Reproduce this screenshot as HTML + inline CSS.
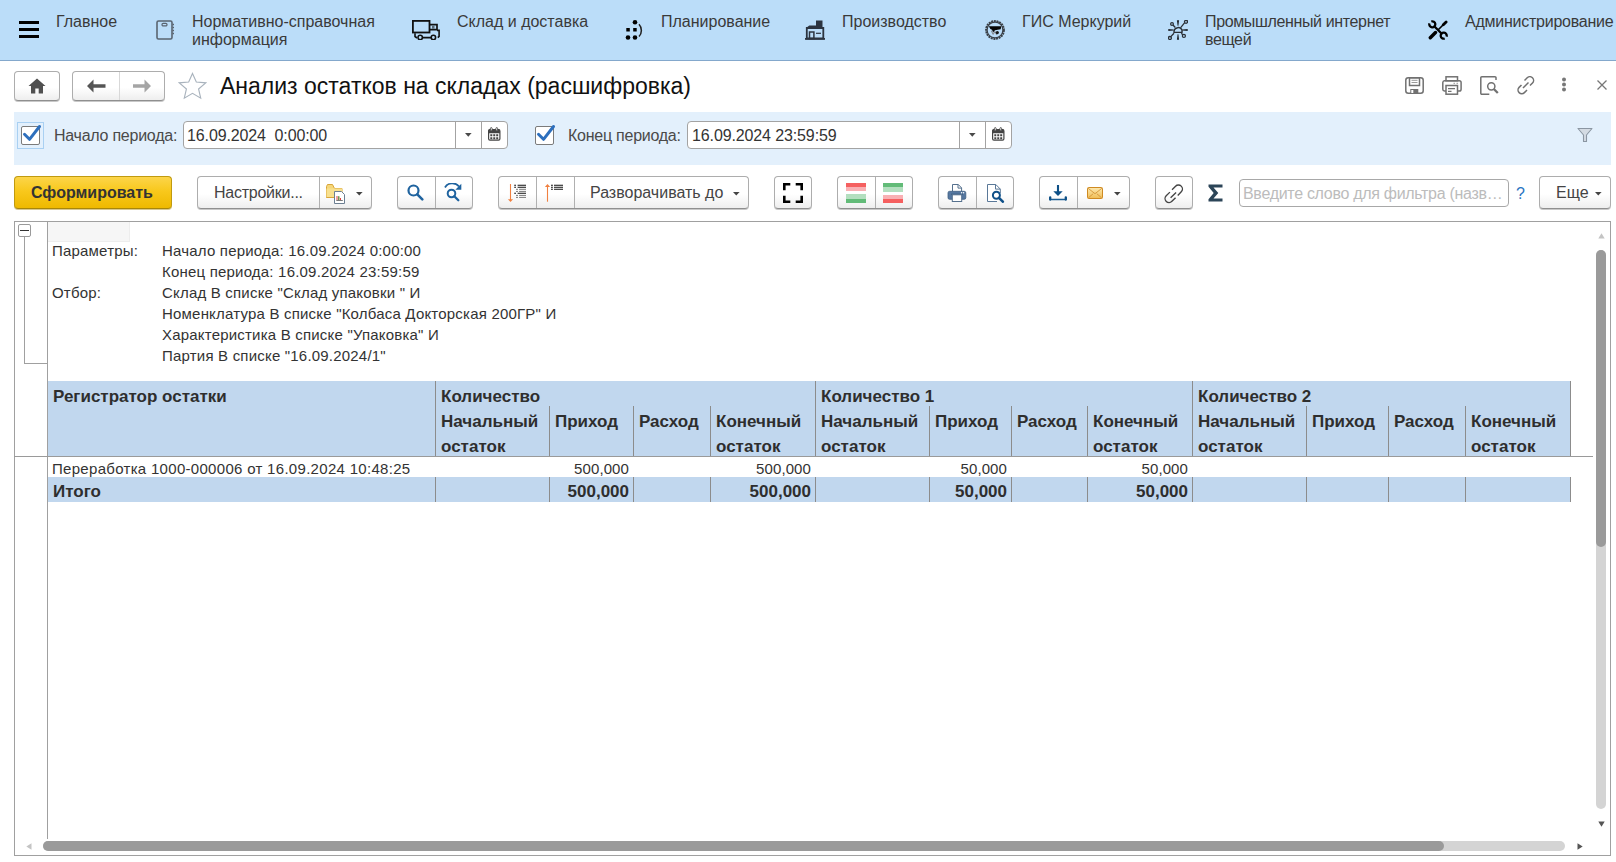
<!DOCTYPE html>
<html><head><meta charset="utf-8">
<style>
*{box-sizing:border-box;margin:0;padding:0}
html,body{width:1616px;height:862px;overflow:hidden;background:#fff;font-family:"Liberation Sans",sans-serif;position:relative}
.a{position:absolute}
#top{left:0;top:0;width:1616px;height:61px;background:#bbddf9;border-bottom:1px solid #84a8cc}
.mt{position:absolute;top:13px;font-size:16px;line-height:18px;color:#3a3a3a;white-space:pre}
.btn{position:absolute;border:1px solid #adadad;border-bottom-color:#8f8f8f;border-radius:4px;background:linear-gradient(#ffffff 0%,#ffffff 55%,#eeeeee 100%);box-shadow:0 1px 0 #c8c8c8}
.div{position:absolute;top:0;bottom:0;width:1px;background:#b0b0b0}
.lbl{position:absolute;font-size:16px;line-height:18px;color:#4a4a4a;white-space:pre;letter-spacing:-0.25px}
.inp{position:absolute;background:#fff;border:1px solid #a3a3a3;border-radius:4px}
.rt{position:absolute;font-size:15px;line-height:18px;color:#333;white-space:pre;letter-spacing:0.2px}
.hd{position:absolute;font-size:17px;line-height:18px;color:#2e2e2e;font-weight:700;white-space:pre}
.vl{position:absolute;width:1px;background:#8c8c8c}
</style></head><body>

<!-- TOP BAR -->
<div id="top" class="a"></div>
<div class="a" style="left:19px;top:21px;width:20px;height:3px;background:#000"></div>
<div class="a" style="left:19px;top:28px;width:20px;height:3px;background:#000"></div>
<div class="a" style="left:19px;top:35px;width:20px;height:3px;background:#000"></div>
<div class="mt" style="left:56px">Главное</div>
<div class="mt" style="left:192px">Нормативно-справочная
информация</div>
<div class="mt" style="left:457px">Склад и доставка</div>
<div class="mt" style="left:661px">Планирование</div>
<div class="mt" style="left:842px">Производство</div>
<div class="mt" style="left:1022px">ГИС Меркурий</div>
<div class="mt" style="left:1205px;letter-spacing:-0.36px">Промышленный интернет
вещей</div>
<div class="mt" style="left:1465px;letter-spacing:-0.25px">Администрирование</div>

<!-- menu icons -->
<svg class="a" style="left:156px;top:20px" width="20" height="20" viewBox="0 0 20 20"><rect x="1" y="1" width="15" height="18" rx="1.5" fill="none" stroke="#5a6470" stroke-width="1.6"/><rect x="6" y="3.3" width="5" height="2.6" rx="1.2" fill="none" stroke="#5a6470" stroke-width="1.2"/><path d="M16.5 4.5h1.5M16.5 7.5h1.5M16.5 10.5h1.5M16.5 13.5h1.5" stroke="#5a6470" stroke-width="1.4"/></svg>
<svg class="a" style="left:412px;top:20px" width="28" height="20" viewBox="0 0 28 20"><rect x="0.9" y="0.9" width="16.6" height="11.6" fill="none" stroke="#111" stroke-width="1.8"/><path d="M17.5 4.6H25V9.6H17.5" fill="none" stroke="#111" stroke-width="1.7"/><rect x="20" y="5.5" width="2.5" height="3.3" fill="#5a6a78"/><path d="M25 10.4h2.1v6l-1.3 1.2M3 13.3v3.2l2 1.5M10.6 17.6h8.7" fill="none" stroke="#111" stroke-width="1.6"/><circle cx="8.2" cy="17.5" r="2.2" fill="none" stroke="#111" stroke-width="1.6"/><circle cx="21.4" cy="17.5" r="2.2" fill="none" stroke="#111" stroke-width="1.6"/></svg>
<svg class="a" style="left:625px;top:20px" width="20" height="20" viewBox="0 0 20 20"><circle cx="10" cy="2.3" r="2.3" fill="#000"/><rect x="1.3" y="8" width="3.5" height="3.5" fill="#000"/><rect x="8.2" y="8" width="3.5" height="3.5" fill="#000"/><circle cx="3" cy="17.5" r="2.3" fill="#000"/><circle cx="10" cy="17.5" r="2.3" fill="#000"/><path d="M14 4.3 A9 9 0 0 1 14 16.5" fill="none" stroke="#222" stroke-width="1.5"/></svg>
<svg class="a" style="left:805px;top:20px" width="20" height="20" viewBox="0 0 20 20"><path d="M11 0.5h6.5v7H11z" fill="#2c3440"/><path d="M2 7.3l2.3-1.8H11v1.8" fill="#2c3440"/><path d="M1.8 8h16.5v10.5H1.8z" fill="none" stroke="#2c3440" stroke-width="1.8"/><path d="M0 18h20v1.8H0z" fill="#2c3440"/><rect x="4.5" y="12" width="4.4" height="6.5" fill="none" stroke="#2c3440" stroke-width="1.5"/><path d="M11 13.3h5" stroke="#2c3440" stroke-width="1.2"/></svg>
<svg class="a" style="left:985px;top:20px" width="20" height="20" viewBox="0 0 20 20"><circle cx="10" cy="10" r="8.9" fill="none" stroke="#3a4048" stroke-width="2" stroke-dasharray="2 0.7"/><circle cx="10" cy="10" r="7.9" fill="none" stroke="#3a4048" stroke-width="1.2"/><path d="M6.3 10.8l1.8 3.4 1.7-2.6 1.8 2.6 1.4-2" fill="none" stroke="#8a9098" stroke-width="1.1"/><path d="M3.8 6.2H16.2L15.7 9.3Q12.5 9.6 10 10.2L8.1 12.3 7 9.8Q5 9.2 3.8 6.2z" fill="#050505"/><circle cx="12.3" cy="12.6" r="1.6" fill="#151515"/></svg>
<svg class="a" style="left:1168px;top:20px" width="20" height="20" viewBox="0 0 20 20"><path d="M8.9 0.3h2.2l-0.7 5.4h-0.8zM8.9 19.7h2.2l-0.7-5.4h-0.8zM0.3 8.9v2.2l5.4-0.7v-0.8zM19.7 8.9v2.2l-5.4-0.7v-0.8z" fill="#20252c"/><path d="M6 12.4Q5.8 8.6 9 8Q10.6 6.8 12.6 8.3Q14.6 9.2 14 12.4z" fill="none" stroke="#2a2f36" stroke-width="1.4"/><path d="M12.5 7.8L16.7 2.7M6 13.2L2.8 16.6M5 5l2.3 2.5M13.3 13.2l1.5 1.5" stroke="#2a2f36" stroke-width="1.3"/><circle cx="18" cy="1.8" r="1.5" fill="none" stroke="#2a2f36" stroke-width="1.3"/><circle cx="4" cy="4" r="1.4" fill="none" stroke="#2a2f36" stroke-width="1.2"/><circle cx="1.9" cy="18" r="1.5" fill="none" stroke="#2a2f36" stroke-width="1.3"/><circle cx="15.9" cy="15.9" r="1.5" fill="none" stroke="#2a2f36" stroke-width="1.3"/></svg>
<svg class="a" style="left:1428px;top:20px" width="20" height="20" viewBox="0 0 20 20"><path d="M2.3 17.7l5.2-5.2" stroke="#000" stroke-width="3.4" stroke-linecap="round"/><path d="M10.5 9.5l5.5-5.5" stroke="#000" stroke-width="1.6" stroke-linecap="round"/><path d="M15.3 4.7l2.8-2.8" stroke="#000" stroke-width="2.8" stroke-linecap="round"/><path d="M6 6l8 8" stroke="#000" stroke-width="2.3"/><path d="M3.27 1.48A3 3 0 1 1 1.48 3.27M16.73 18.52A3 3 0 1 1 18.52 16.73" fill="none" stroke="#000" stroke-width="2.3"/></svg>

<!-- TITLE ROW -->
<div class="btn" style="left:14px;top:71px;width:46px;height:30px"></div>
<svg class="a" style="left:28px;top:78px" width="18" height="16" viewBox="0 0 18 16"><path d="M9 0.5L0.5 8H3v7.5h4.3v-5h3.4v5H15V8h2.5z" fill="#505050"/></svg>
<div class="btn" style="left:72px;top:71px;width:93px;height:30px"><div class="div" style="left:46px;background:#d8d8d8"></div></div>
<svg class="a" style="left:87px;top:79px" width="19" height="14" viewBox="0 0 19 14"><path d="M0 7L6.5 0.5v4.7h12v3.6h-12v4.7z" fill="#555"/></svg>
<svg class="a" style="left:132px;top:79px" width="19" height="14" viewBox="0 0 19 14"><path d="M19 7L12.5 0.5v4.7H1v3.6h11.5v4.7z" fill="#a5a5a5"/></svg>
<svg class="a" style="left:178px;top:72px" width="29" height="28" viewBox="0 0 31 30"><path d="M15.5 1.5l4.1 9.3 10 .8-7.6 6.6 2.3 9.8-8.8-5.2-8.8 5.2 2.3-9.8-7.6-6.6 10-.8z" fill="none" stroke="#a9b3bd" stroke-width="1.2" stroke-linejoin="miter"/></svg>
<div class="a" style="left:220px;top:73px;font-size:23px;line-height:26px;color:#111;white-space:pre">Анализ остатков на складах (расшифровка)</div>

<svg class="a" style="left:1405px;top:77px" width="19" height="17" viewBox="0 0 19 17"><rect x="0.8" y="0.8" width="17.4" height="15.4" rx="2.5" fill="none" stroke="#717171" stroke-width="1.5"/><rect x="4.5" y="0.8" width="10" height="7.7" fill="none" stroke="#717171" stroke-width="1.5"/><path d="M6.5 3.3h6M6.5 5.5h6" stroke="#9a9a9a" stroke-width="1"/><rect x="5.3" y="12" width="8" height="4.5" fill="#717171"/><rect x="6.3" y="13" width="2" height="3" fill="#fff"/></svg>
<svg class="a" style="left:1442px;top:76px" width="20" height="19" viewBox="0 0 20 19"><rect x="4" y="0.8" width="11.5" height="4" fill="none" stroke="#717171" stroke-width="1.5"/><path d="M4 15H2.5A1.8 1.8 0 0 1 0.8 13.2V6.5A1.8 1.8 0 0 1 2.5 4.8h14.8a1.8 1.8 0 0 1 1.8 1.8v6.7a1.8 1.8 0 0 1-1.8 1.8H15.5" fill="none" stroke="#717171" stroke-width="1.5"/><rect x="4" y="9.5" width="11.5" height="8.7" fill="#fff" stroke="#717171" stroke-width="1.5"/><path d="M6 12.7h7M6 15.3h3.5" stroke="#717171" stroke-width="1.2"/><path d="M11.5 7.3h1.5M14.5 7.3h1.5" stroke="#999" stroke-width="1"/></svg>
<svg class="a" style="left:1480px;top:76px" width="20" height="19" viewBox="0 0 20 19"><path d="M9.3 18.2H1.8A1 1 0 0 1 0.8 17.2V1.8A1 1 0 0 1 1.8 0.8H15a1 1 0 0 1 1 1V4" fill="none" stroke="#717171" stroke-width="1.5"/><circle cx="11.3" cy="10.3" r="3.6" fill="none" stroke="#717171" stroke-width="1.5"/><path d="M13.8 13l4 4" stroke="#717171" stroke-width="2.3"/></svg>
<svg class="a" style="left:1516px;top:76px" width="20" height="19" viewBox="0 0 20 19"><path d="M8.5 4.5l2.7-2.7a3.7 3.7 0 0 1 5.3 5.2L14 9.5M11 14l-2.6 2.6a3.7 3.7 0 0 1-5.3-5.2L5.5 9M7 12l5.5-5.5" fill="none" stroke="#717171" stroke-width="1.5"/></svg>
<svg class="a" style="left:1561px;top:77px" width="6" height="15" viewBox="0 0 6 15"><circle cx="3" cy="2.5" r="2" fill="#777"/><circle cx="3" cy="7.5" r="2" fill="#777"/><circle cx="3" cy="12.5" r="2" fill="#777"/></svg>
<svg class="a" style="left:1597px;top:80px" width="10" height="10" viewBox="0 0 10 10"><path d="M0.5 0.5l9 9M9.5 0.5l-9 9" stroke="#777" stroke-width="1.3"/></svg>

<!-- FILTER PANEL -->
<div class="a" style="left:14px;top:112px;width:1597px;height:53px;background:#e3f0fc"></div>
<div class="a" style="left:17px;top:122px;width:27px;height:27px;border:1px solid #a9d0f2"></div>
<div class="a" style="left:21px;top:126px;width:19px;height:19px;border:1px solid #7b7b7b;border-radius:2px;background:#fff"></div>
<svg class="a" style="left:22px;top:124px" width="20" height="18" viewBox="0 0 20 18"><path d="M2.5 10.3l5 5L17.5 2.5" fill="none" stroke="#2d6fbd" stroke-width="3" stroke-linecap="round" stroke-linejoin="round"/></svg>
<div class="lbl" style="left:54px;top:127px">Начало периода:</div>
<div class="inp" style="left:183px;top:121px;width:325px;height:28px"><div class="div" style="left:271px;background:#a3a3a3"></div><div class="div" style="left:297px;background:#a3a3a3"></div></div>
<div class="a" style="left:187px;top:127px;font-size:16px;line-height:18px;color:#333;white-space:pre;letter-spacing:-0.12px">16.09.2024  0:00:00</div>
<svg class="a" style="left:465px;top:133px" width="7" height="4" viewBox="0 0 7 4"><path d="M0 0h6.6L3.3 3.8z" fill="#4a4a4a"/></svg>
<svg class="a" style="left:488px;top:127px" width="13" height="15" viewBox="0 0 13 15"><rect x="0.6" y="2.6" width="11.3" height="10.5" rx="1.3" fill="#fff" stroke="#444" stroke-width="1.2"/><path d="M1.9 2.3h8.7a1.3 1.3 0 0 1 1.3 1.3v2.7H0.6V3.6a1.3 1.3 0 0 1 1.3-1.3z" fill="#444"/><rect x="2.4" y="0.6" width="1.7" height="3.2" rx=".85" fill="#fff" stroke="#444" stroke-width=".9"/><rect x="7.9" y="0.6" width="1.7" height="3.2" rx=".85" fill="#fff" stroke="#444" stroke-width=".9"/><path d="M2.3 7.3h2v2h-2zM5.25 7.3h2v2h-2zM8.2 7.3h2v2h-2zM2.3 10.2h2v2h-2zM5.25 10.2h2v2h-2zM8.2 10.2h2v2h-2z" fill="#444"/></svg>
<div class="a" style="left:535px;top:126px;width:19px;height:19px;border:1px solid #7b7b7b;border-radius:2px;background:#fff"></div>
<svg class="a" style="left:536px;top:124px" width="20" height="18" viewBox="0 0 20 18"><path d="M2.5 10.3l5 5L17.5 2.5" fill="none" stroke="#2d6fbd" stroke-width="3" stroke-linecap="round" stroke-linejoin="round"/></svg>
<div class="lbl" style="left:568px;top:127px">Конец периода:</div>
<div class="inp" style="left:687px;top:121px;width:325px;height:28px"><div class="div" style="left:271px;background:#a3a3a3"></div><div class="div" style="left:297px;background:#a3a3a3"></div></div>
<div class="a" style="left:692px;top:127px;font-size:16px;line-height:18px;color:#333;white-space:pre;letter-spacing:-0.12px">16.09.2024 23:59:59</div>
<svg class="a" style="left:969px;top:133px" width="7" height="4" viewBox="0 0 7 4"><path d="M0 0h6.6L3.3 3.8z" fill="#4a4a4a"/></svg>
<svg class="a" style="left:992px;top:127px" width="13" height="15" viewBox="0 0 13 15"><rect x="0.6" y="2.6" width="11.3" height="10.5" rx="1.3" fill="#fff" stroke="#444" stroke-width="1.2"/><path d="M1.9 2.3h8.7a1.3 1.3 0 0 1 1.3 1.3v2.7H0.6V3.6a1.3 1.3 0 0 1 1.3-1.3z" fill="#444"/><rect x="2.4" y="0.6" width="1.7" height="3.2" rx=".85" fill="#fff" stroke="#444" stroke-width=".9"/><rect x="7.9" y="0.6" width="1.7" height="3.2" rx=".85" fill="#fff" stroke="#444" stroke-width=".9"/><path d="M2.3 7.3h2v2h-2zM5.25 7.3h2v2h-2zM8.2 7.3h2v2h-2zM2.3 10.2h2v2h-2zM5.25 10.2h2v2h-2zM8.2 10.2h2v2h-2z" fill="#444"/></svg>
<svg class="a" style="left:1577px;top:127px" width="16" height="16" viewBox="0 0 16 16"><path d="M1 1.5h14L9.5 8v6.5H6.5V8z" fill="#d4dbe3" stroke="#8b96a2" stroke-width="1.1" stroke-linejoin="round"/></svg>

<!-- TOOLBAR -->
<div class="a" style="left:14px;top:176px;width:158px;height:33px;border:1px solid #c09a10;border-bottom-color:#a8860a;border-radius:4px;background:linear-gradient(#fcd54a 0%,#f8c81c 45%,#efb900 100%);box-shadow:0 1px 0 #d8c890"></div>
<div class="a" style="left:31px;top:184px;font-size:16px;line-height:18px;font-weight:700;color:#333;white-space:pre">Сформировать</div>

<div class="btn" style="left:197px;top:176px;width:175px;height:33px"><div class="div" style="left:121px"></div></div>
<div class="a" style="left:214px;top:184px;font-size:16px;line-height:18px;color:#444;white-space:pre;letter-spacing:-0.25px">Настройки...</div>
<svg class="a" style="left:326px;top:183px" width="22" height="21" viewBox="0 0 22 21"><path d="M0.5 3.5V14.5H16V5.5H8.5L6.5 1.5H1.5z" fill="#f5d77a" stroke="#d9a53a" stroke-width="1"/><path d="M0.5 5.5H16V14.5H0.5z" fill="#f8e08e"/><path d="M0.5 14.5H16" stroke="#d9a53a" stroke-width="1"/><path d="M8.5 8.5h7l3 3v9h-10z" fill="#fff" stroke="#6c7f92" stroke-width="1"/><path d="M11 17V13M12.8 17v-3.2M14.5 17v-2" stroke="#e04040" stroke-width="1"/><path d="M12.8 17v-4" stroke="#40a040" stroke-width="1"/><path d="M10.3 17.5h6.5" stroke="#555" stroke-width=".8"/></svg>
<svg class="a" style="left:356px;top:192px" width="7" height="4" viewBox="0 0 7 4"><path d="M0 0h6.6L3.3 3.6z" fill="#444"/></svg>

<div class="btn" style="left:397px;top:176px;width:76px;height:33px"><div class="div" style="left:37px"></div></div>
<svg class="a" style="left:407px;top:184px" width="17" height="17" viewBox="0 0 17 17"><circle cx="6.5" cy="6.5" r="5" fill="none" stroke="#1f639f" stroke-width="2.2"/><path d="M10.3 10.3l5 5" stroke="#1f639f" stroke-width="2.6" stroke-linecap="round"/></svg>
<svg class="a" style="left:444px;top:183px" width="19" height="19" viewBox="0 0 19 19"><path d="M1 4.5A8 7 0 0 1 15 3.5" fill="none" stroke="#1f639f" stroke-width="1.8"/><path d="M17.3 0.8v6h-6z" fill="#1f639f"/><circle cx="7.5" cy="10.5" r="3.8" fill="none" stroke="#1f639f" stroke-width="2"/><path d="M10.3 13.3l4 4" stroke="#1f639f" stroke-width="2.3" stroke-linecap="round"/></svg>

<div class="btn" style="left:498px;top:176px;width:251px;height:33px"><div class="div" style="left:37px"></div><div class="div" style="left:75px"></div></div>
<svg class="a" style="left:506px;top:183px" width="22" height="20" viewBox="0 0 22 20"><path d="M4.5 1v16" stroke="#f08040" stroke-width="1.1"/><path d="M1.9 16.2h5.2L4.5 19z" fill="#f08040"/><path d="M8.2 2.3h1.8M11.6 2.3H20M8.2 4.3h1.8M11.6 4.3H20M8.2 10.3h1.8M11.6 10.3H20" stroke="#111" stroke-width="1.1"/><path d="M10 6.3h2M13.1 6.3H20M10 8.4h2M13.1 8.4H20M10 12.4h2M13.1 12.4H20M10 14.4h2M13.1 14.4H20" stroke="#7a7a7a" stroke-width="1"/></svg>
<svg class="a" style="left:543px;top:183px" width="22" height="20" viewBox="0 0 22 20"><path d="M4.5 3.5V18.7" stroke="#f08040" stroke-width="1.1"/><path d="M1.9 4.1h5.2L4.5 1z" fill="#f08040"/><path d="M8 2.3h1.9M11 2.3H20M8 4.3h1.9M11 4.3H20M8 6.3h1.9M11 6.3H20" stroke="#111" stroke-width="1.1"/></svg>
<div class="a" style="left:590px;top:184px;font-size:16px;line-height:18px;color:#444;white-space:pre">Разворачивать до</div>
<svg class="a" style="left:733px;top:192px" width="7" height="4" viewBox="0 0 7 4"><path d="M0 0h6.6L3.3 3.6z" fill="#444"/></svg>

<div class="btn" style="left:774px;top:176px;width:38px;height:33px"></div>
<svg class="a" style="left:783px;top:183px" width="20" height="20" viewBox="0 0 20 20"><path d="M1.3 7.3V1.3H7.3M12.7 1.3h6v6M1.3 12.7v6h6M12.7 18.7h6v-6" fill="none" stroke="#000" stroke-width="2.6"/></svg>

<div class="btn" style="left:837px;top:176px;width:76px;height:33px"><div class="div" style="left:37px"></div></div>
<div class="a" style="left:846px;top:183px;width:20px;height:4px;background:#f56060"></div><div class="a" style="left:846px;top:187px;width:20px;height:4px;background:#f9b0b4"></div>
<div class="a" style="left:846px;top:194px;width:20px;height:5px;background:#b3dfbf"></div><div class="a" style="left:846px;top:199px;width:20px;height:4px;background:#62bb78"></div>
<div class="a" style="left:883px;top:183px;width:20px;height:4px;background:#62bb78"></div><div class="a" style="left:883px;top:187px;width:20px;height:5px;background:#b3dfbf"></div>
<div class="a" style="left:883px;top:195px;width:20px;height:4px;background:#f9b0b4"></div><div class="a" style="left:883px;top:199px;width:20px;height:4px;background:#f56060"></div>

<div class="btn" style="left:938px;top:176px;width:76px;height:33px"><div class="div" style="left:37px"></div></div>
<svg class="a" style="left:947px;top:183px" width="20" height="20" viewBox="0 0 20 20"><path d="M5.5 8.5V1.5h5.8l3.3 3.4v3.6" fill="#fff" stroke="#56718e" stroke-width="1"/><path d="M11 1.5v3.6h3.6" fill="none" stroke="#56718e" stroke-width="1"/><rect x="1" y="8.3" width="17.8" height="8" rx="1.6" fill="#5577a0" stroke="#3f5f82" stroke-width="0.8"/><path d="M4 11.2h12" stroke="#3b5b7e" stroke-width="1"/><rect x="5.3" y="11.8" width="9.4" height="6.7" fill="#fff" stroke="#56718e" stroke-width="1"/><circle cx="14.6" cy="9.8" r="0.7" fill="#fff"/><circle cx="16.6" cy="9.8" r="0.7" fill="#fff"/></svg>
<svg class="a" style="left:986px;top:183px" width="20" height="20" viewBox="0 0 20 20"><path d="M11 18.5H1.5V1.5h8.3l4.5 4.6v4" fill="#fff" stroke="#5a7898" stroke-width="1"/><path d="M9.5 1.5v4.6h4.8" fill="none" stroke="#5a7898" stroke-width="1"/><circle cx="10.4" cy="12.3" r="3.5" fill="#fff" stroke="#0f5088" stroke-width="2"/><path d="M13 14.9l3.8 3.8" stroke="#0f5088" stroke-width="2.6" stroke-linecap="round"/></svg>

<div class="btn" style="left:1039px;top:176px;width:91px;height:33px"><div class="div" style="left:37px"></div></div>
<svg class="a" style="left:1049px;top:185px" width="18" height="16" viewBox="0 0 18 16"><path d="M9 0.3v8" stroke="#0d4f86" stroke-width="2.1" stroke-linecap="round"/><path d="M4.3 6.3h9.4L9 11z" fill="#0d4f86"/><path d="M1.2 12.2v2.4h15.6v-2.4" fill="none" stroke="#1a5d93" stroke-width="1.5"/><path d="M1.2 12.3v2.3M16.8 12.3v2.3" stroke="#0d4f86" stroke-width="2.3" stroke-linecap="round"/></svg>
<svg class="a" style="left:1087px;top:187px" width="16" height="12" viewBox="0 0 16 12"><defs><linearGradient id="eg" x1="0" y1="0" x2="0" y2="1"><stop offset="0" stop-color="#fde9b0"/><stop offset="1" stop-color="#f0bd55"/></linearGradient></defs><rect x="0.5" y="0.5" width="15" height="11" rx="1" fill="url(#eg)" stroke="#cf8a22" stroke-width="1"/><path d="M1 1.2l7 5.5 7-5.5M1.2 11l5-4.3M14.8 11l-5-4.3" fill="none" stroke="#d49538" stroke-width="0.9"/></svg>
<svg class="a" style="left:1114px;top:192px" width="7" height="4" viewBox="0 0 7 4"><path d="M0 0h6.6L3.3 3.6z" fill="#444"/></svg>

<div class="btn" style="left:1155px;top:176px;width:38px;height:33px"></div>
<svg class="a" style="left:1164px;top:183px" width="21" height="21" viewBox="0 0 21 21"><g transform="translate(0,1.2) scale(1.1)"><path d="M7.3 5l3.2-3.2a3.6 3.6 0 0 1 5.2 5.1L12.5 10.3M10.5 12.3l-3.3 3.3A3.6 3.6 0 0 1 2 10.5L5.4 7.2M6 12.3L11 7.5" fill="none" stroke="#444" stroke-width="1.25"/></g></svg>
<svg class="a" style="left:1208px;top:184px" width="15" height="18" viewBox="0 0 15 17" preserveAspectRatio="none"><path d="M0.5 0.5h14v2.7H5.5l4.8 5.3-4.8 5.3h9v2.7H0.5v-2.2l5.2-5.8L0.5 2.7z" fill="#2c4558"/></svg>
<div class="a" style="left:1239px;top:179px;width:270px;height:28px;border:1px solid #a8a8a8;border-radius:4px;background:#fff"></div>
<div class="a" style="left:1243px;top:185px;font-size:16px;line-height:18px;color:#bcbcbc;white-space:pre;letter-spacing:-0.3px">Введите слово для фильтра (назв…</div>
<div class="a" style="left:1516px;top:185px;font-size:16px;line-height:18px;color:#2a74c2;white-space:pre">?</div>
<div class="btn" style="left:1539px;top:176px;width:72px;height:33px"></div>
<div class="a" style="left:1556px;top:184px;font-size:16px;line-height:18px;color:#444;white-space:pre">Еще</div>
<svg class="a" style="left:1595px;top:192px" width="7" height="4" viewBox="0 0 7 4"><path d="M0 0h6.6L3.3 3.6z" fill="#444"/></svg>

<!-- REPORT -->
<div class="a" style="left:14px;top:221px;width:1597px;height:635px;border:1px solid #a0a0a0;background:#fff"></div>
<div class="a" style="left:48px;top:222px;width:82px;height:20px;background:#f6f6f6;border-right:1px solid #ededed;border-bottom:1px solid #ededed"></div>
<div class="a" style="left:18px;top:224px;width:13px;height:13px;border:1px solid #9a9a9a;border-radius:2px;background:#fff"></div>
<div class="a" style="left:20px;top:230px;width:9px;height:1px;background:#333"></div>
<div class="a" style="left:24px;top:237px;width:1px;height:127px;background:#a0a0a0"></div>
<div class="a" style="left:24px;top:363px;width:23px;height:1px;background:#a0a0a0"></div>
<div class="a" style="left:47px;top:222px;width:1px;height:617px;background:#a0a0a0"></div>

<div class="rt" style="left:52px;top:242px">Параметры:</div>
<div class="rt" style="left:52px;top:284px">Отбор:</div>
<div class="rt" style="left:162px;top:242px">Начало периода: 16.09.2024 0:00:00</div>
<div class="rt" style="left:162px;top:263px">Конец периода: 16.09.2024 23:59:59</div>
<div class="rt" style="left:162px;top:284px">Склад В списке "Склад упаковки " И</div>
<div class="rt" style="left:162px;top:305px">Номенклатура В списке "Колбаса Докторская 200ГР" И</div>
<div class="rt" style="left:162px;top:326px">Характеристика В списке "Упаковка" И</div>
<div class="rt" style="left:162px;top:347px">Партия В списке "16.09.2024/1"</div>

<!-- table header -->
<div class="a" style="left:48px;top:381px;width:1522px;height:75px;background:#c1d7ee"></div>
<div class="a" style="left:14px;top:456px;width:1579px;height:1px;background:#9a9a9a"></div>
<div class="a" style="left:48px;top:477px;width:1522px;height:25px;background:#c1d7ee"></div>
<div class="vl" style="left:435px;top:381px;height:75px"></div>
<div class="vl" style="left:815px;top:381px;height:75px"></div>
<div class="vl" style="left:1192px;top:381px;height:75px"></div>
<div class="vl" style="left:1570px;top:381px;height:75px"></div>
<div class="vl" style="left:549px;top:406px;height:50px"></div>
<div class="vl" style="left:633px;top:406px;height:50px"></div>
<div class="vl" style="left:710px;top:406px;height:50px"></div>
<div class="vl" style="left:929px;top:406px;height:50px"></div>
<div class="vl" style="left:1011px;top:406px;height:50px"></div>
<div class="vl" style="left:1087px;top:406px;height:50px"></div>
<div class="vl" style="left:1306px;top:406px;height:50px"></div>
<div class="vl" style="left:1388px;top:406px;height:50px"></div>
<div class="vl" style="left:1465px;top:406px;height:50px"></div>
<div class="vl" style="left:435px;top:477px;height:25px"></div>
<div class="vl" style="left:815px;top:477px;height:25px"></div>
<div class="vl" style="left:1192px;top:477px;height:25px"></div>
<div class="vl" style="left:1570px;top:477px;height:25px"></div>
<div class="vl" style="left:549px;top:477px;height:25px"></div>
<div class="vl" style="left:633px;top:477px;height:25px"></div>
<div class="vl" style="left:710px;top:477px;height:25px"></div>
<div class="vl" style="left:929px;top:477px;height:25px"></div>
<div class="vl" style="left:1011px;top:477px;height:25px"></div>
<div class="vl" style="left:1087px;top:477px;height:25px"></div>
<div class="vl" style="left:1306px;top:477px;height:25px"></div>
<div class="vl" style="left:1388px;top:477px;height:25px"></div>
<div class="vl" style="left:1465px;top:477px;height:25px"></div>
<div class="hd" style="left:53px;top:388px">Регистратор остатки</div>
<div class="hd" style="left:441px;top:388px">Количество</div>
<div class="hd" style="left:821px;top:388px">Количество 1</div>
<div class="hd" style="left:1198px;top:388px">Количество 2</div>
<div class="hd" style="left:441px;top:413px">Начальный</div>
<div class="hd" style="left:441px;top:438px">остаток</div>
<div class="hd" style="left:555px;top:413px">Приход</div>
<div class="hd" style="left:639px;top:413px">Расход</div>
<div class="hd" style="left:716px;top:413px">Конечный</div>
<div class="hd" style="left:716px;top:438px">остаток</div>
<div class="hd" style="left:821px;top:413px">Начальный</div>
<div class="hd" style="left:821px;top:438px">остаток</div>
<div class="hd" style="left:935px;top:413px">Приход</div>
<div class="hd" style="left:1017px;top:413px">Расход</div>
<div class="hd" style="left:1093px;top:413px">Конечный</div>
<div class="hd" style="left:1093px;top:438px">остаток</div>
<div class="hd" style="left:1198px;top:413px">Начальный</div>
<div class="hd" style="left:1198px;top:438px">остаток</div>
<div class="hd" style="left:1312px;top:413px">Приход</div>
<div class="hd" style="left:1394px;top:413px">Расход</div>
<div class="hd" style="left:1471px;top:413px">Конечный</div>
<div class="hd" style="left:1471px;top:438px">остаток</div>
<div class="rt" style="left:52px;top:460px;letter-spacing:0.3px">Переработка 1000-000006 от 16.09.2024 10:48:25</div>
<div class="rt" style="left:429px;width:200px;text-align:right;top:460px;letter-spacing:0.1px">500,000</div>
<div class="hd" style="left:429px;width:200px;text-align:right;top:483px">500,000</div>
<div class="rt" style="left:611px;width:200px;text-align:right;top:460px;letter-spacing:0.1px">500,000</div>
<div class="hd" style="left:611px;width:200px;text-align:right;top:483px">500,000</div>
<div class="rt" style="left:807px;width:200px;text-align:right;top:460px;letter-spacing:0.1px">50,000</div>
<div class="hd" style="left:807px;width:200px;text-align:right;top:483px">50,000</div>
<div class="rt" style="left:988px;width:200px;text-align:right;top:460px;letter-spacing:0.1px">50,000</div>
<div class="hd" style="left:988px;width:200px;text-align:right;top:483px">50,000</div>
<div class="hd" style="left:53px;top:483px">Итого</div>

<!-- scrollbars -->
<svg class="a" style="left:1598px;top:233px" width="7" height="6" viewBox="0 0 7 6"><path d="M0.3 5.5h6.4L3.5 0.3z" fill="#c4c4c4"/></svg>
<div class="a" style="left:1596px;top:250px;width:10px;height:559px;border-radius:5px;background:#d4d4d4"></div>
<div class="a" style="left:1596px;top:250px;width:10px;height:297px;border-radius:5px;background:#9a9a9a"></div>
<svg class="a" style="left:1598px;top:821px" width="7" height="6" viewBox="0 0 7 6"><path d="M0.3 0.5h6.4L3.5 5.7z" fill="#555"/></svg>
<svg class="a" style="left:26px;top:843px" width="6" height="7" viewBox="0 0 6 7"><path d="M5.5 0.3v6.4L0.3 3.5z" fill="#c4c4c4"/></svg>
<div class="a" style="left:43px;top:841px;width:1522px;height:10px;border-radius:5px;background:#d4d4d4"></div>
<div class="a" style="left:43px;top:841px;width:1401px;height:10px;border-radius:5px;background:#9a9a9a"></div>
<svg class="a" style="left:1577px;top:843px" width="6" height="7" viewBox="0 0 6 7"><path d="M0.5 0.3v6.4L5.7 3.5z" fill="#555"/></svg>

</body></html>
